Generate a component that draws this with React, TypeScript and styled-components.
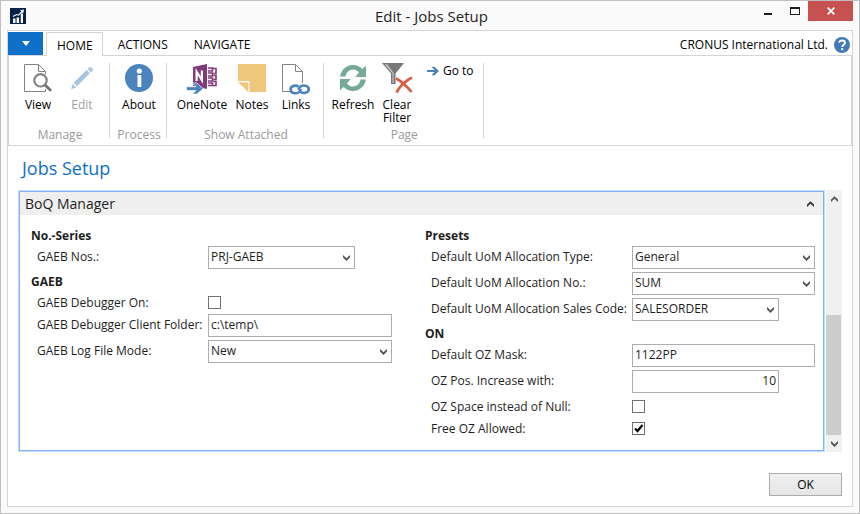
import React, { useId, useState } from "react";
import styled, { createGlobalStyle, css } from "styled-components";

const GlobalStyle = createGlobalStyle`
  *, *::before, *::after { box-sizing: border-box; }
  body {
    margin: 0;
    background: #fff;
    color: #1e1e1e;
    font: 12px/16px "Open Sans", "Noto Sans", sans-serif;
  }
  button, input, select { font: inherit; color: inherit; margin: 0; }
`;

/* ---------- window ---------- */

const Window = styled.div`
  display: flex;
  flex-direction: column;
  min-height: 100vh;
  padding: 0 6px 6px;
  background: #fafafa;
  border: 1px solid #bfbfbf;
`;

const TitleBar = styled.header`
  display: grid;
  grid-template-columns: 1fr auto 1fr;
  height: 29px;
  padding-left: 3px;
`;

const AppIcon = styled.span`
  align-self: center;
  height: 16px;
`;

const WindowTitle = styled.h1`
  margin: 0;
  align-self: center;
  font-size: 15px;
  line-height: 20px;
  font-weight: 400;
`;

const WindowButtons = styled.div`
  display: flex;
  justify-content: flex-end;
  align-items: flex-start;
`;

const WindowButton = styled.button<{ $close?: boolean }>`
  display: grid;
  place-items: center;
  width: ${(p) => (p.$close ? 45 : 27)}px;
  height: 20px;
  padding: 0;
  border: 0;
  background: ${(p) => (p.$close ? "#c75050" : "transparent")};
`;

const Frame = styled.div`
  display: flex;
  flex-direction: column;
  flex: 1;
  background: #fff;
  border: 1px solid #d4d4d4;
`;

/* ---------- ribbon ---------- */

const TabRow = styled.nav`
  display: flex;
  align-items: flex-end;
  height: 25px;
  border-bottom: 1px solid #d4d4d4;
`;

const FileButton = styled.button`
  display: grid;
  place-items: center;
  width: 35px;
  height: 23px;
  margin-right: 3px;
  padding: 0;
  border: 0;
  background: #1070c8;
`;

const Tab = styled.button<{ $active?: boolean }>`
  height: 24px;
  padding: 3px 10px 0;
  border: 1px solid transparent;
  border-bottom: 0;
  background: transparent;
  color: #000;
  margin-right: 4px;
  ${(p) =>
    p.$active &&
    css`
      margin-bottom: -1px;
      padding: 3px 9px 0 10px;
      background: #fff;
      border-color: #d4d4d4;
    `}
`;

const Company = styled.div`
  display: flex;
  align-items: center;
  gap: 6px;
  height: 21px;
  margin-left: auto;
  padding-right: 2px;
  color: #000;
`;

const HelpButton = styled.button`
  display: block;
  width: 16px;
  height: 16px;
  padding: 0;
  border: 0;
  background: none;
`;

const Ribbon = styled.section`
  display: flex;
  height: 90px;
  padding-top: 7px;
  border: 1px solid #d4d4d4;
  border-top: 0;
`;

const Group = styled.div`
  display: flex;
  flex-direction: column;
  justify-content: space-between;
  padding: 1px 5px 2px 7px;
`;

const GroupButtons = styled.div`
  display: flex;
  align-items: flex-start;
`;

const GroupCaption = styled.div`
  text-align: center;
  color: #9a9a9a;
`;

const Divider = styled.div`
  width: 1px;
  margin-bottom: 7px;
  background: #d4d4d4;
`;

const BigButton = styled.button<{ $wide?: boolean }>`
  display: flex;
  flex-direction: column;
  align-items: center;
  gap: 6px;
  width: ${(p) => (p.$wide ? 56 : 44)}px;
  padding: 0;
  border: 0;
  background: none;
  color: #000;
  line-height: 13px;
  &:disabled { color: #a0a0a0; }
  & > svg { overflow: visible; }
`;

const SmallButton = styled.button`
  display: flex;
  align-items: center;
  gap: 4px;
  margin: 0 4px 0 8px;
  padding: 0;
  border: 0;
  background: none;
  color: #000;
  line-height: 13px;
`;

/* ---------- page ---------- */

const PageTitle = styled.h2`
  margin: 10px 14px;
  font-size: 18px;
  line-height: 24px;
  font-weight: 400;
  color: #1070c8;
`;

const PageArea = styled.div`
  display: flex;
  gap: 1px;
  margin: 0 10px;
`;

const FastTab = styled.section`
  flex: 1;
  border: 1px solid #7fb0f8;
  outline: 1px solid #c4dcfb;
  margin: 1px;
  background: #fff;
`;

const FastTabHeader = styled.button`
  display: flex;
  align-items: center;
  justify-content: space-between;
  width: 100%;
  height: 23px;
  padding: 0 8px 0 5px;
  border: 0;
  background: #efefef;
  font-size: 14px;
`;

const Columns = styled.div`
  display: grid;
  grid-template-columns: 361fr 390fr;
  gap: 33px;
  padding: 11px 8px 10px 11px;
`;

const Section = styled.div``;

const SectionTitle = styled.h3`
  margin: 0;
  font-size: 12px;
  line-height: 20px;
  font-weight: 700;
`;

const Row = styled.div<{ $label: number; $check?: boolean }>`
  display: grid;
  grid-template-columns: ${(p) => p.$label}px 1fr;
  align-items: start;
  height: ${(p) => (p.$check ? 22 : 26)}px;
`;

const FieldLabel = styled.label`
  padding: 2px 0 0 6px;
  line-height: 18px;
  white-space: nowrap;
`;

const boxed = css`
  width: 100%;
  height: 23px;
  border: 1px solid #abadb3;
  border-radius: 0;
  background: #fff;
  padding: 0 2px 2px;
`;

const Control = styled.div<{ $short?: boolean }>`
  display: grid;
  width: ${(p) => (p.$short ? "147px" : "100%")};
  & > * { grid-area: 1 / 1; }
  & > svg {
    place-self: center end;
    margin-right: 4px;
    pointer-events: none;
  }
`;

const TextInput = styled.input<{ $right?: boolean }>`
  ${boxed}
  text-align: ${(p) => (p.$right ? "right" : "left")};
`;

const Select = styled.select`
  ${boxed}
  appearance: none;
`;

const CheckControl = styled.div`
  display: grid;
  justify-content: start;
  padding-top: 4px;
  & > * { grid-area: 1 / 1; }
  & > svg { pointer-events: none; }
`;

const CheckInput = styled.input`
  appearance: none;
  width: 13px;
  height: 13px;
  border: 1px solid #707070;
  background: #fff;
`;

const ScrollBar = styled.div`
  display: flex;
  flex-direction: column;
  width: 16px;
  background: #f0f0f0;
`;

const ScrollButton = styled.button`
  display: grid;
  place-items: center;
  height: 17px;
  padding: 0;
  border: 0;
  background: none;
`;

const ScrollTrack = styled.div`
  display: flex;
  flex-direction: column;
  flex: 1;
`;

const ScrollGap = styled.div`
  flex: 108;
`;

const ScrollThumb = styled.div`
  flex: 120;
  margin-right: 1px;
  background: #cdcdcd;
`;

const Footer = styled.footer`
  display: flex;
  justify-content: flex-end;
  margin-top: auto;
  padding: 10px;
`;

const OkButton = styled.button`
  width: 73px;
  height: 23px;
  padding: 0;
  border: 1px solid #acacac;
  background: linear-gradient(#f0f0f0, #e5e5e5);
  color: #000;
`;

/* ---------- icons ---------- */

const Chevron = ({ up = false, color = "#555" }: { up?: boolean; color?: string }) => (
  <svg width="9" height="8" viewBox="0 0 9 8" aria-hidden="true">
    <path
      d={up ? "M1 4.5 4.5 1.2 8 4.5V7L4.5 3.8 1 7Z" : "M1 1 4.5 4.3 8 1V3.6L4.5 7 1 3.6Z"}
      fill={color}
    />
  </svg>
);

const LogoIcon = () => (
  <svg width="16" height="16" viewBox="0 0 16 16" aria-hidden="true">
    <rect width="16" height="16" fill="#05204a" />
    <path d="M3 10.5h2.5V15H3zM6.6 9.5h2.5V15H6.6zM10.8 5.5H13V15h-2.2z" fill="#fff" />
    <path d="M3 8.5 6.5 6.5 8.5 7.2 12.5 3" fill="none" stroke="#fff" strokeWidth="1.1" />
    <path d="M10 2.3 14 1.6 13.2 5.4Z" fill="#fff" />
  </svg>
);

const ViewIcon = () => (
  <svg width="28" height="28" viewBox="0 0 28 28" aria-hidden="true">
    <path d="M21.5 10V7.5L14.5.5H.5v27h21V25" fill="none" stroke="#838383" />
    <path d="M14.5.5v7h7" fill="none" stroke="#838383" />
    <circle cx="16.5" cy="16.3" r="6.2" fill="#fff" stroke="#808080" strokeWidth="2.1" />
    <path d="M20.8 20.8 27 26.8" stroke="#707070" strokeWidth="2.8" />
  </svg>
);

const EditIcon = () => (
  <svg width="28" height="28" viewBox="0 0 28 28" aria-hidden="true">
    <g fill="#a9c4e2">
      <path d="M3 25.2 4.8 19.8 8.2 23.4Z" />
      <path d="M5.600 18.800 18.600 6 21.800 9.300 9 22.300Z" />
      <path d="M19.600 5 22.200 2.500 25.500 5.800 22.900 8.400Z" />
    </g>
  </svg>
);

const AboutIcon = () => (
  <svg width="28" height="28" viewBox="0 0 28 28" aria-hidden="true">
    <circle cx="14" cy="14" r="14" fill="#4b83bd" />
    <circle cx="14.3" cy="7" r="2.6" fill="#fff" />
    <path d="M12.5 11h3.8v12h-3.8z" fill="#fff" />
  </svg>
);

const OneNoteIcon = () => (
  <svg width="32" height="28" viewBox="0 0 32 28" aria-hidden="true">
    <path d="M7 3 21 0v25L7 22Z" fill="#80397b" />
    <path d="M10.6 17V7.7l5.3 8.4V6.4" fill="none" stroke="#fff" strokeWidth="2.2" />
    <path
      d="M22 4h4.500V7H22M22 9h4.500v3H22M22 14h4.500v3H22M22 19h4.500v2.500H22M26.500 4.500H30V9.500H27.500M27.500 11.500H30V15.500H27.500M27.500 17.500H30V21.500H22"
      fill="none"
      stroke="#80397b"
      strokeWidth="1.6"
    />
    <path d="M.5 22.7h9.500L6.300 19h4.500l6.500 5.800-6.500 5.200H6.300L10 26.600H.5Z" fill="#4b83bd" stroke="#fff" strokeWidth=".7" />
  </svg>
);

const NotesIcon = () => (
  <svg width="28" height="28" viewBox="0 0 28 28" aria-hidden="true">
    <path d="M0 0h28v28H11.500V17H0Z" fill="#efc77c" />
    <path d="M0 18.200h10.300V28Z" fill="#efc77c" />
  </svg>
);

const LinksIcon = () => (
  <svg width="28" height="28" viewBox="0 0 28 28" aria-hidden="true">
    <path d="M8 27.500H.5V.5h13l7 7V19M13.500.5v7h7" fill="none" stroke="#838383" />
    <g fill="none" stroke="#4b83bd" strokeWidth="2.6">
      <path d="M16.500 22.800C14.500 20.900 8.600 21.300 8.600 25.500c0 4.200 5.800 4.300 7.900 3 1.500-.9 2-2 2.600-3.500" />
      <path d="M18.500 28c2 1.500 8.300 1.200 8.300-2.800 0-4-5.800-4.300-8-2.900-1.400.9-2 2.200-2.500 3.500" />
    </g>
  </svg>
);

const RefreshIcon = () => (
  <svg width="28" height="28" viewBox="0 0 28 28" aria-hidden="true">
    <g fill="#76a997">
      <path d="M1 12.500C2.500 5 8 1 14 1c4.300 0 7.300 1.700 9.300 4L27 1.800V13H16.300L20 8.600C18.500 6.700 16.600 5.500 14 5.500c-4 0-6.800 3-7.500 7Z" />
      <path d="M27 15.500C25.500 23 20 27 14 27c-4.300 0-7.300-1.700-9.300-4L1 26.200V15h10.700L8 19.400c1.500 1.900 3.400 3.100 6 3.100 4 0 6.800-3 7.500-7Z" />
    </g>
  </svg>
);

const ClearFilterIcon = () => (
  <svg width="30" height="28" viewBox="0 0 30 28" aria-hidden="true">
    <path d="M0-1h22L13.500 9.500V20H9V9.500Z" fill="#787878" />
    <path d="M3 .2h2L11.500 9v10h-1V9.500Z" fill="#cfcfcf" />
    <path d="M14 14.500C19 17 25 22.500 29.500 28M30 13.500C24 16.500 18 22 14.500 28.500" fill="none" stroke="#d85f43" strokeWidth="2.700" />
  </svg>
);

const GoToIcon = () => (
  <svg width="12" height="10" viewBox="0 0 12 10" aria-hidden="true">
    <path d="M0 4h7.500L4.500 .7h3L12 5 7.500 9.300h-3L7.500 6H0Z" fill="#4b83bd" />
  </svg>
);

const HelpIcon = () => (
  <svg width="16" height="16" viewBox="0 0 16 16" aria-hidden="true">
    <circle cx="8" cy="8" r="8" fill="#4379b6" />
    <path d="M5.200 5.800C5.200 2.600 11 2.700 11 5.800 11 7.800 8.200 7.700 8.200 10" fill="none" stroke="#fff" strokeWidth="1.900" />
    <rect x="7.200" y="11.200" width="2" height="2" fill="#fff" />
  </svg>
);

/* ---------- field components ---------- */

type Base = { label: string; labelWidth: number };

const SelectField = ({ label, labelWidth, value, short }: Base & { value: string; short?: boolean }) => {
  const id = useId();
  return (
    <Row $label={labelWidth}>
      <FieldLabel htmlFor={id}>{label}</FieldLabel>
      <Control $short={short}>
        <Select id={id} defaultValue={value}>
          <option>{value}</option>
        </Select>
        <Chevron />
      </Control>
    </Row>
  );
};

const TextField = ({ label, labelWidth, value, short }: Base & { value: string; short?: boolean }) => {
  const id = useId();
  return (
    <Row $label={labelWidth}>
      <FieldLabel htmlFor={id}>{label}</FieldLabel>
      <Control $short={short}>
        <TextInput id={id} defaultValue={value} $right={short} />
      </Control>
    </Row>
  );
};

const CheckField = ({ label, labelWidth, initial = false }: Base & { initial?: boolean }) => {
  const id = useId();
  const [checked, setChecked] = useState(initial);
  return (
    <Row $label={labelWidth} $check>
      <FieldLabel htmlFor={id}>{label}</FieldLabel>
      <CheckControl>
        <CheckInput id={id} type="checkbox" checked={checked} onChange={(e) => setChecked(e.target.checked)} />
        {checked && (
          <svg width="13" height="13" viewBox="0 0 13 13" aria-hidden="true">
            <path d="M3 6.500 5.500 9 10.500 3" fill="none" stroke="#000" strokeWidth="2.200" />
          </svg>
        )}
      </CheckControl>
    </Row>
  );
};

const LEFT = 177;
const RIGHT = 207;

export default function App() {
  const [open, setOpen] = useState(true);
  return (
    <>
      <GlobalStyle />
      <Window>
        <TitleBar>
          <AppIcon><LogoIcon /></AppIcon>
          <WindowTitle>Edit - Jobs Setup</WindowTitle>
          <WindowButtons>
            <WindowButton aria-label="Minimize">
              <svg width="8" height="8" viewBox="0 0 8 8"><path d="M0 6h8v2H0z" fill="#1e1e1e" /></svg>
            </WindowButton>
            <WindowButton aria-label="Maximize">
              <svg width="10" height="8" viewBox="0 0 10 8"><path d="M0 0h10v8H0zM1 2v5h8V2z" fill="#1e1e1e" fillRule="evenodd" /></svg>
            </WindowButton>
            <WindowButton $close aria-label="Close">
              <svg width="8" height="8" viewBox="0 0 8 8"><path d="M.7.700 7.300 7.300M7.300.700.700 7.300" stroke="#fff" strokeWidth="1.800" /></svg>
            </WindowButton>
          </WindowButtons>
        </TitleBar>
        <Frame>
          <TabRow>
            <FileButton aria-label="Application menu">
              <svg width="8" height="5" viewBox="0 0 8 5"><path d="M0 0h8L4 5Z" fill="#fff" /></svg>
            </FileButton>
            <Tab $active>HOME</Tab>
            <Tab>ACTIONS</Tab>
            <Tab>NAVIGATE</Tab>
            <Company>
              CRONUS International Ltd.
              <HelpButton aria-label="Help"><HelpIcon /></HelpButton>
            </Company>
          </TabRow>
          <Ribbon>
            <Group>
              <GroupButtons>
                <BigButton><ViewIcon />View</BigButton>
                <BigButton disabled><EditIcon />Edit</BigButton>
              </GroupButtons>
              <GroupCaption>Manage</GroupCaption>
            </Group>
            <Divider />
            <Group>
              <GroupButtons>
                <BigButton><AboutIcon />About</BigButton>
              </GroupButtons>
              <GroupCaption>Process</GroupCaption>
            </Group>
            <Divider />
            <Group>
              <GroupButtons>
                <BigButton $wide><OneNoteIcon />OneNote</BigButton>
                <BigButton><NotesIcon />Notes</BigButton>
                <BigButton><LinksIcon />Links</BigButton>
              </GroupButtons>
              <GroupCaption>Show Attached</GroupCaption>
            </Group>
            <Divider />
            <Group>
              <GroupButtons>
                <BigButton><RefreshIcon />Refresh</BigButton>
                <BigButton><ClearFilterIcon />Clear Filter</BigButton>
                <SmallButton><GoToIcon />Go to</SmallButton>
              </GroupButtons>
              <GroupCaption>Page</GroupCaption>
            </Group>
            <Divider />
          </Ribbon>
          <PageTitle>Jobs Setup</PageTitle>
          <PageArea>
            <FastTab>
              <FastTabHeader aria-expanded={open} onClick={() => setOpen(!open)}>
                BoQ Manager
                <Chevron up={open} color="#333" />
              </FastTabHeader>
              {open && (
                <Columns>
                  <Section>
                    <SectionTitle>No.-Series</SectionTitle>
                    <SelectField label="GAEB Nos.:" labelWidth={LEFT} value="PRJ-GAEB" short />
                    <SectionTitle>GAEB</SectionTitle>
                    <CheckField label="GAEB Debugger On:" labelWidth={LEFT} />
                    <TextField label="GAEB Debugger Client Folder:" labelWidth={LEFT} value={"c:\\temp\\"} />
                    <SelectField label="GAEB Log File Mode:" labelWidth={LEFT} value="New" />
                  </Section>
                  <Section>
                    <SectionTitle>Presets</SectionTitle>
                    <SelectField label="Default UoM Allocation Type:" labelWidth={RIGHT} value="General" />
                    <SelectField label="Default UoM Allocation No.:" labelWidth={RIGHT} value="SUM" />
                    <SelectField label="Default UoM Allocation Sales Code:" labelWidth={RIGHT} value="SALESORDER" short />
                    <SectionTitle>ON</SectionTitle>
                    <TextField label="Default OZ Mask:" labelWidth={RIGHT} value="1122PP" />
                    <TextField label="OZ Pos. Increase with:" labelWidth={RIGHT} value="10" short />
                    <CheckField label="OZ Space instead of Null:" labelWidth={RIGHT} />
                    <CheckField label="Free OZ Allowed:" labelWidth={RIGHT} initial />
                  </Section>
                </Columns>
              )}
            </FastTab>
            <ScrollBar>
              <ScrollButton aria-label="Scroll up"><Chevron up /></ScrollButton>
              <ScrollTrack>
                <ScrollGap />
                <ScrollThumb />
              </ScrollTrack>
              <ScrollButton aria-label="Scroll down"><Chevron /></ScrollButton>
            </ScrollBar>
          </PageArea>
          <Footer>
            <OkButton>OK</OkButton>
          </Footer>
        </Frame>
      </Window>
    </>
  );
}
